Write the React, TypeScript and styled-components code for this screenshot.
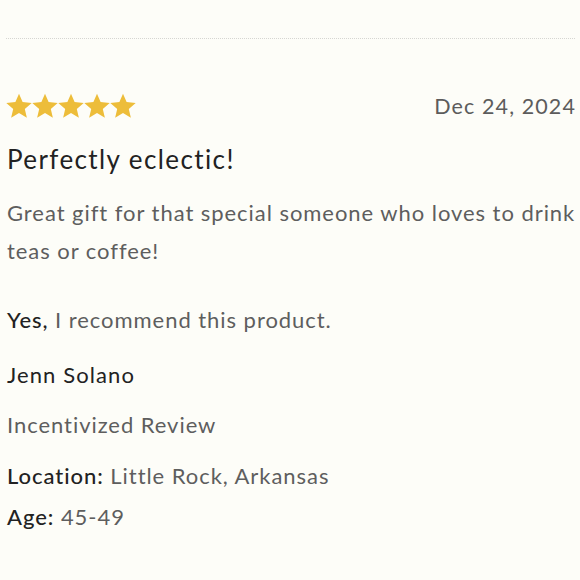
import styled, { createGlobalStyle } from "styled-components";

const GlobalStyle = createGlobalStyle`
  html, body {
    margin: 0;
    padding: 0;
    background: #fdfdf8;
  }
  body {
    font-family: Lato, "Open Sans", sans-serif;
  }
`;

const Star = ({ size = 26 }: { size?: number }) => (
  <svg width={size} height={size} viewBox="1 1 22 22">
    <path
      d="M12 1.6l3.05 7.1 7.7.68-5.84 5.06 1.75 7.53L12 17.98l-6.66 3.99 1.75-7.53L1.25 9.38l7.7-.68z"
      fill="#edbd3a"
    />
  </svg>
);

export default function App() {
  return (
    <>
      <GlobalStyle />
      <Page>
        <Divider />
        <Review>
          <TopRow>
            <Stars>
              {[0, 1, 2, 3, 4].map((i) => (
                <Star key={i} />
              ))}
            </Stars>
            <DateText>Dec 24, 2024</DateText>
          </TopRow>
          <Title>Perfectly eclectic!</Title>
          <Body>
            Great gift for that special someone who loves to drink teas or
            coffee!
          </Body>
          <Line $gap={35}>
            <Label>Yes,</Label> I recommend this product.
          </Line>
          <Author>Jenn Solano</Author>
          <Line $gap={20}>Incentivized Review</Line>
          <Line $gap={21}>
            <Label>Location:</Label> Little Rock, Arkansas
          </Line>
          <Line $gap={11}>
            <Label>Age:</Label> 45-49
          </Line>
        </Review>
      </Page>
    </>
  );
}

const Page = styled.div`
  width: 580px;
  height: 580px;
  padding: 38px 2px 0 7px;
  box-sizing: border-box;
`;

const Divider = styled.div`
  border-top: 1px dotted #d6d6d2;
  margin: 0 3px 0 -1px;
`;

const Review = styled.div`
  display: flex;
  flex-direction: column;
  padding-top: 55px;
`;

const TopRow = styled.div`
  display: flex;
  justify-content: space-between;
  align-items: center;
  margin-top: -1px;
  margin-right: 3px;
`;

const Stars = styled.div`
  display: flex;
  margin-left: -1px;
`;

const DateText = styled.div`
  font-size: 21.5px;
  color: #5c5c5c;
  letter-spacing: 1.1px;
  margin-right: -1px;
`;

const Title = styled.h2`
  margin: 24px 0 0;
  font-size: 26px;
  font-weight: 400;
  color: #222;
  letter-spacing: 1.4px;
`;

const Body = styled.p`
  margin: 19px 0 0;
  font-size: 22px;
  line-height: 38px;
  color: #5e5e5e;
  letter-spacing: 0.95px;
`;

const Line = styled.div<{ $gap: number }>`
  margin-top: ${(p) => p.$gap}px;
  font-size: 22px;
  line-height: 30px;
  color: #5e5e5e;
  letter-spacing: 0.95px;
`;

const Label = styled.span`
  color: #222;
  font-weight: 500;
`;

const Author = styled.div`
  margin-top: 25px;
  font-size: 22px;
  line-height: 30px;
  color: #222;
  letter-spacing: 1.1px;
`;
